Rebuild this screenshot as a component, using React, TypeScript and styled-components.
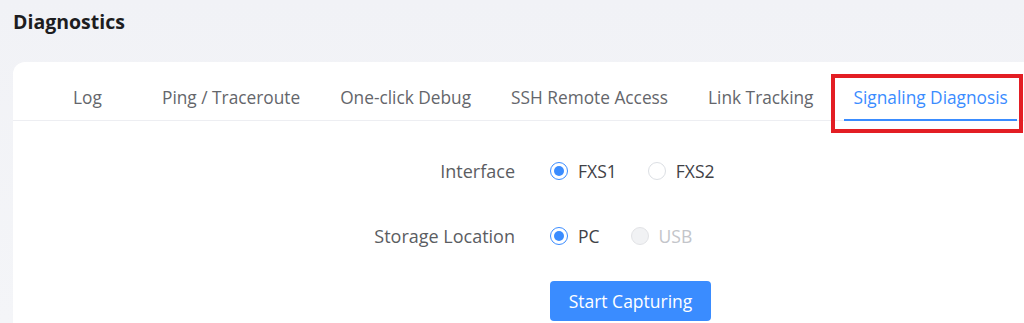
import React, { useState } from "react";
import styled, { createGlobalStyle } from "styled-components";

const GlobalStyle = createGlobalStyle`
  html, body { margin: 0; padding: 0; }
  body {
    background: linear-gradient(180deg, #f1f2f6 0%, #f4f5f8 100%);
    font-family: "Open Sans", "Noto Sans", Arial, sans-serif;
    height: 323px;
    overflow: hidden;
  }
`;

const Page = styled.div`
  padding: 0 0 0 13px;
  width: 1040px;
  box-sizing: border-box;
`;

const Title = styled.h1`
  margin: 0;
  padding-top: 8px;
  height: 62px;
  box-sizing: border-box;
  font-size: 19.5px;
  font-weight: 700;
  line-height: 28px;
  color: #1d1d1f;
`;

const Card = styled.div`
  background: #ffffff;
  border-radius: 12px 0 0 0;
  height: 270px;
`;

const TabBar = styled.div`
  display: flex;
  align-items: stretch;
  height: 59px;
  padding: 0 0 0 40px;
  border-bottom: 1px solid #edeef2;
  box-sizing: border-box;
`;

const Tab = styled.div<{ $active?: boolean }>`
  position: relative;
  display: flex;
  align-items: center;
  padding: 12px 20px 0;
  min-width: 49px;
  font-size: 17.3px;
  color: ${(p) => (p.$active ? "#3a8cff" : "#64666b")};
  white-space: nowrap;
  cursor: pointer;
`;

const InkBar = styled.span`
  position: absolute;
  left: 10px;
  right: 11px;
  bottom: -1px;
  height: 2px;
  background: #3a8cff;
`;

const Highlight = styled.span`
  position: absolute;
  left: -3px;
  right: 5px;
  top: 12px;
  bottom: -13px;
  border: 4px solid #e31e24;
  pointer-events: none;
`;

const Form = styled.div`
  display: grid;
  grid-template-columns: 502px 1fr;
  column-gap: 35px;
  padding-top: 36px;
`;

const Label = styled.div`
  text-align: right;
  font-size: 18px;
  color: #5b5d62;
  height: 28px;
  line-height: 28px;
`;

const Options = styled.div`
  display: flex;
  align-items: center;
  gap: 31px;
  height: 28px;
`;

const Row = styled.div`
  display: contents;
`;

const Spacer = styled.div<{ $h: number }>`
  grid-column: 1 / -1;
  height: ${(p) => p.$h}px;
`;

const RadioLabel = styled.label<{ $disabled?: boolean }>`
  display: flex;
  align-items: center;
  gap: 10px;
  font-size: 17.5px;
  color: ${(p) => (p.$disabled ? "#c3c5ca" : "#3f4146")};
  cursor: ${(p) => (p.$disabled ? "not-allowed" : "pointer")};
`;

const Circle = styled.span<{ $checked?: boolean; $disabled?: boolean }>`
  width: 18px;
  height: 18px;
  box-sizing: border-box;
  border-radius: 50%;
  border: 1px solid
    ${(p) => (p.$checked ? "#3a8cff" : p.$disabled ? "#e2e3e6" : "#dcdfe4")};
  background: ${(p) => (p.$disabled ? "#f1f2f4" : "#fff")};
  display: flex;
  align-items: center;
  justify-content: center;
  &::after {
    content: "";
    width: 10px;
    height: 10px;
    border-radius: 50%;
    background: #3a8cff;
    display: ${(p) => (p.$checked ? "block" : "none")};
  }
`;

const Button = styled.button`
  grid-column: 2;
  justify-self: start;
  width: 161px;
  height: 40px;
  border: none;
  border-radius: 4px;
  background: #3a8cff;
  color: #ffffff;
  font-family: "Open Sans", "Noto Sans", Arial, sans-serif;
  font-size: 17.5px;
  cursor: pointer;
`;

const tabs = [
  "Log",
  "Ping / Traceroute",
  "One-click Debug",
  "SSH Remote Access",
  "Link Tracking",
  "Signaling Diagnosis",
];

type Opt = { value: string; disabled?: boolean };

function Radio({
  options,
  value,
  onChange,
}: {
  options: Opt[];
  value: string;
  onChange: (v: string) => void;
}) {
  return (
    <Options>
      {options.map((o) => (
        <RadioLabel
          key={o.value}
          $disabled={o.disabled}
          onClick={() => !o.disabled && onChange(o.value)}
        >
          <Circle $checked={value === o.value} $disabled={o.disabled} />
          {o.value}
        </RadioLabel>
      ))}
    </Options>
  );
}

export default function App() {
  const [iface, setIface] = useState("FXS1");
  const [loc, setLoc] = useState("PC");
  const active = "Signaling Diagnosis";
  return (
    <>
      <GlobalStyle />
      <Page>
        <Title>Diagnostics</Title>
        <Card>
          <TabBar>
            {tabs.map((t) => (
              <Tab key={t} $active={t === active}>
                {t}
                {t === active && (
                  <>
                    <InkBar />
                    <Highlight />
                  </>
                )}
              </Tab>
            ))}
          </TabBar>
          <Form>
            <Row>
              <Label>Interface</Label>
              <Radio
                options={[{ value: "FXS1" }, { value: "FXS2" }]}
                value={iface}
                onChange={setIface}
              />
            </Row>
            <Spacer $h={37} />
            <Row>
              <Label>Storage Location</Label>
              <Radio
                options={[{ value: "PC" }, { value: "USB", disabled: true }]}
                value={loc}
                onChange={setLoc}
              />
            </Row>
            <Spacer $h={31} />
            <Button>Start Capturing</Button>
          </Form>
        </Card>
      </Page>
    </>
  );
}
